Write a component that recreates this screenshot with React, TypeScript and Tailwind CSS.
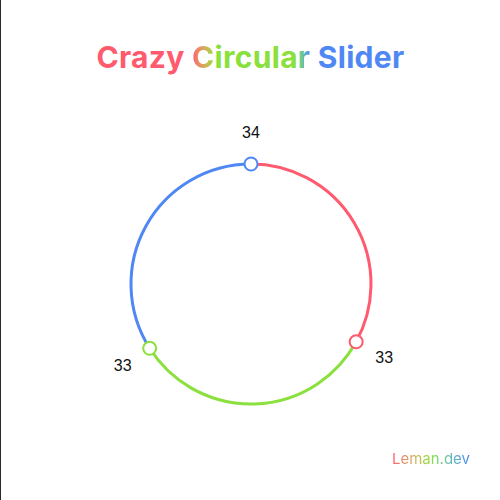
const RED = "#ff5a6e";
const GREEN = "#8ae03c";
const BLUE = "#4f87f5";

const C = 160;
const R = 120;

const pt = (deg: number, r = R) => {
  const a = (deg * Math.PI) / 180;
  return { x: C + r * Math.sin(a), y: C - r * Math.cos(a) };
};

const arc = (from: number, to: number) => {
  const a = pt(from);
  const b = pt(to);
  const large = to - from > 180 ? 1 : 0;
  return `M ${a.x} ${a.y} A ${R} ${R} 0 ${large} 1 ${b.x} ${b.y}`;
};

const segments = [
  { from: 0, to: 118.8, color: RED, value: 33 },
  { from: 118.8, to: 237.6, color: GREEN, value: 33 },
  { from: 237.6, to: 360, color: BLUE, value: 34 },
];

const CircularSlider = () => {
  return (
    <svg width={320} height={320} viewBox="0 0 320 320" className="mt-[47px]">
      {segments.map((s) => (
        <path key={s.from} d={arc(s.from, s.to)} fill="none" stroke={s.color} strokeWidth={3} />
      ))}
      {segments.map((s) => {
        const h = pt(s.to % 360);
        const l = pt(s.to % 360, 152);
        return (
          <g key={"h" + s.from}>
            <circle cx={h.x} cy={h.y} r={6.5} fill="white" stroke={s.color} strokeWidth={2} />
            <text
              x={l.x}
              y={l.y + 5.5}
              textAnchor="middle"
              fontSize={16}
              fill="#111"
              fontFamily="'Liberation Sans', Arial, sans-serif"
            >
              {s.value}
            </text>
          </g>
        );
      })}
    </svg>
  );
};

export default function App() {
  return (
    <div className="h-[500px] w-[500px] bg-white border-l border-[#2a2a2a] flex flex-col items-center font-['Inter',sans-serif] overflow-hidden">
      <h1 className="mt-[37px] text-[30px] leading-[40px] font-bold tracking-[0.3px]">
        <span className="text-[#ff5a6e]">Crazy </span>
        <span className="bg-gradient-to-r from-[#ff5a6e] to-[#8ae03c] bg-clip-text text-transparent">C</span>
        <span className="text-[#8ae03c]">ircula</span>
        <span className="bg-gradient-to-r from-[#8ae03c] to-[#4f87f5] bg-clip-text text-transparent">r</span>
        <span className="text-[#4f87f5]"> Slider</span>
      </h1>
      <CircularSlider />
      <div className="flex-1" />
      <div className="self-end mr-[30px] mb-[32px] text-[15px] leading-[18px] bg-gradient-to-r from-[#ff5a6e] via-[#8ae03c] to-[#4f87f5] bg-clip-text text-transparent">
        Leman.dev
      </div>
    </div>
  );
}
